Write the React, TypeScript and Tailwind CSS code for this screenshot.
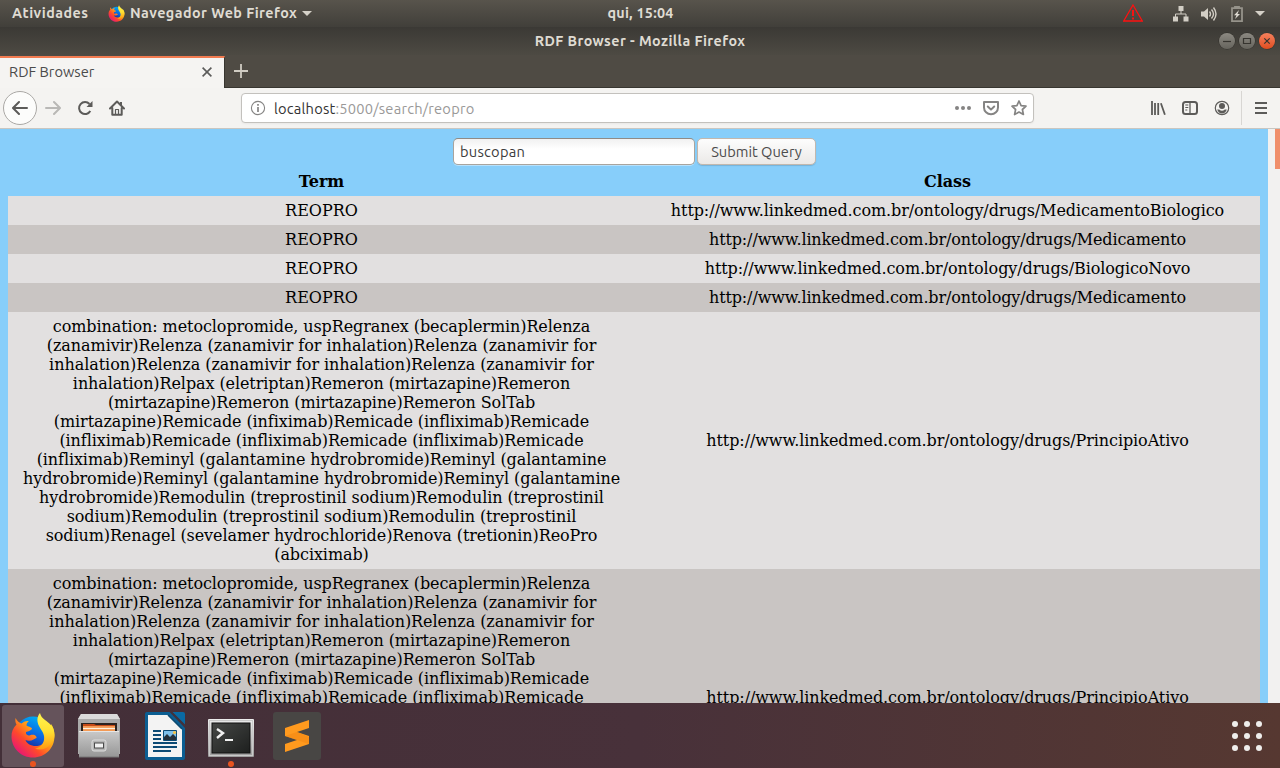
import type { ReactNode } from "react";

const UI = "font-['Ubuntu','Noto_Sans',sans-serif]";

const comboLines = [
  "combination: metoclopromide, uspRegranex (becaplermin)Relenza",
  "(zanamivir)Relenza (zanamivir for inhalation)Relenza (zanamivir for",
  "inhalation)Relenza (zanamivir for inhalation)Relenza (zanamivir for",
  "inhalation)Relpax (eletriptan)Remeron (mirtazapine)Remeron",
  "(mirtazapine)Remeron (mirtazapine)Remeron SolTab",
  "(mirtazapine)Remicade (infiximab)Remicade (infliximab)Remicade",
  "(infliximab)Remicade (infliximab)Remicade (infliximab)Remicade",
  "(infliximab)Reminyl (galantamine hydrobromide)Reminyl (galantamine",
  "hydrobromide)Reminyl (galantamine hydrobromide)Reminyl (galantamine",
  "hydrobromide)Remodulin (treprostinil sodium)Remodulin (treprostinil",
  "sodium)Remodulin (treprostinil sodium)Remodulin (treprostinil",
  "sodium)Renagel (sevelamer hydrochloride)Renova (tretionin)ReoPro",
  "(abciximab)",
];

const base = "http://www.linkedmed.com.br/ontology/drugs/";
const rows: { term: string[]; cls: string }[] = [
  { term: ["REOPRO"], cls: "MedicamentoBiologico" },
  { term: ["REOPRO"], cls: "Medicamento" },
  { term: ["REOPRO"], cls: "BiologicoNovo" },
  { term: ["REOPRO"], cls: "Medicamento" },
  { term: comboLines, cls: "PrincipioAtivo" },
  { term: comboLines, cls: "PrincipioAtivo" },
];

function Firefox({ id, className }: { id: string; className: string }) {
  return (
    <svg viewBox="0 0 44 46" className={className}>
      <defs>
        <linearGradient id={id + "a"} x1="0.9" y1="0.1" x2="0.1" y2="0.9">
          <stop offset="0" stopColor="#ffe226" />
          <stop offset="0.35" stopColor="#ffa516" />
          <stop offset="0.65" stopColor="#ff4a2b" />
          <stop offset="1" stopColor="#e3107e" />
        </linearGradient>
        <linearGradient id={id + "b"} x1="0.7" y1="0" x2="0.3" y2="1">
          <stop offset="0" stopColor="#00b3f4" />
          <stop offset="0.5" stopColor="#0a62e0" />
          <stop offset="1" stopColor="#23106e" />
        </linearGradient>
        <linearGradient id={id + "c"} x1="0.4" y1="0" x2="0.4" y2="1">
          <stop offset="0" stopColor="#fff44f" />
          <stop offset="0.5" stopColor="#ffe033" />
          <stop offset="1" stopColor="#ff980e" />
        </linearGradient>
      </defs>
      <circle cx="22" cy="23" r="18.5" fill={`url(#${id}b)`} />
      <path
        d="M4.500 6C4 9 4.500 11 5.500 12.500C2 16 .3 20 .5 25C1 37 10.500 45.500 22 45.500C34 45.500 43.500 36.500 43.500 24C43.500 19 42.500 15 40 12C40.500 24 35 33 26.500 34C20 34.500 15.500 31.500 14.500 28C17 29 20 29 22.500 27.500C24.500 26.200 26 26.600 25.500 25C24.500 22.500 21.500 22.500 19 23.200C16 24 14.500 22 15 20C17 19.500 20.500 18.500 21 16.500C20.500 15 16.500 14.500 15.500 13.500C15.500 11.500 16.500 10 18 9C14.500 8.500 12 10 10.500 11.500C8.500 11 6 9 4.500 6Z"
        fill={`url(#${id}a)`}
      />
      <path
        d="M29 1C25.500 5 26 10 28 14C31 19.500 34 22 33 28C32 33 28 36 24 36.500C34 41 43.500 31 43.500 23C43 13 37.500 11 34 8C31.500 6 29.500 4 29 1Z"
        fill={`url(#${id}c)`}
      />
    </svg>
  );
}

function TopBar() {
  return (
    <header
      className={`${UI} flex h-[27px] shrink-0 items-center bg-linear-to-b from-[#58544c] to-[#413f3a] text-[14.3px] font-bold text-[#dfdbd2]`}
    >
      <div className="flex w-[427px] items-center pl-3">
        <span className="w-[96px] shrink-0 pt-px tracking-[0.5px]">Atividades</span>
        <Firefox id="s" className="mr-[5px] h-[17px] w-[17px] shrink-0" />
        <span className="w-[168px] shrink-0 whitespace-nowrap pt-px tracking-[0.45px]">Navegador Web Firefox</span>
        <svg viewBox="0 0 10 5" className="ml-1 h-[5px] w-[10px]" fill="#d5d1c8">
          <path d="M0 0h10L5 5z" />
        </svg>
      </div>
      <span className="w-[427px] text-center tracking-[0.25px]">qui, 15:04</span>
      <div className="flex flex-1 items-center justify-end pr-[15px]">
        <svg viewBox="0 0 20 18" className="mr-[30px] mb-[2px] h-[18px] w-5" fill="none" stroke="#ff1010" strokeWidth="1.300">
          <path d="M10 1L19.300 17H.7Z" />
          <path d="M10 6v6M10 13.500v2" strokeWidth="1.900" />
        </svg>
        <svg viewBox="0 0 16 16" className="mr-3 h-4 w-4" fill="#d2cec5">
          <path d="M5.500 0h5v5h-5zM0 10.500h5v5H0zM10.500 10.500h5v5h-5z" />
          <path d="M8 5v3M2.500 11V8h10.500v3" stroke="#d2cec5" fill="none" />
        </svg>
        <svg viewBox="0 0 16 16" className="mr-[14px] h-4 w-4" fill="#d2cec5">
          <path d="M0 5.500h3L7 2v12L3 10.500H0z" />
          <path d="M8.500 5.500q2 2.500 0 5M10.500 3.500q4 4.500 0 9M12.500 1.500q5 6.500 0 13" stroke="#d2cec5" strokeWidth="1.400" fill="none" />
        </svg>
        <svg viewBox="0 0 12 16" className="mr-3 h-4 w-3" fill="none">
          <path d="M4 2V.8h4V2M1 2.200h10v13H1z" stroke="#96938b" strokeWidth="1.800" />
          <path d="M8 4L3 9.200h2.500L4 13l5-5H6.500z" fill="#dfdbd2" />
        </svg>
        <svg viewBox="0 0 10 5" className="h-[5px] w-[10px]" fill="#d5d1c8">
          <path d="M0 0h10L5 5z" />
        </svg>
      </div>
    </header>
  );
}

function WinButton({ close, children }: { close?: boolean; children: ReactNode }) {
  return (
    <span
      className={
        close
          ? "flex h-4 w-4 items-center justify-center rounded-full bg-linear-to-b from-[#f5805c] to-[#e04c1c] shadow-[0_0_0_0.5px_#35332e]"
          : "flex h-4 w-4 items-center justify-center rounded-full bg-linear-to-b from-[#8c8982] to-[#66645d] shadow-[0_0_0_0.5px_#2f2d29]"
      }
    >
      <svg viewBox="0 0 16 16" className="h-4 w-4" fill="none" stroke="#36342f" strokeWidth="1.200">
        {children}
      </svg>
    </span>
  );
}

function TitleBar() {
  return (
    <div className={`${UI} flex h-7 shrink-0 items-center bg-linear-to-b from-[#3b3935] to-[#4d4a43] text-[14.3px] font-bold text-[#dfdbd2]`}>
      <span className="w-[1215px] whitespace-nowrap pt-[2px] pl-[65px] text-center tracking-[0.42px]">RDF Browser - Mozilla Firefox</span>
      <div className="flex gap-1 pl-1">
        <WinButton>
          <path d="M4 8.500h8" />
        </WinButton>
        <WinButton>
          <path d="M4.500 5.500h7v5h-7z" />
        </WinButton>
        <WinButton close>
          <path d="M5.300 5.300l5.400 5.400M10.700 5.300l-5.400 5.400" />
        </WinButton>
      </div>
    </div>
  );
}

function TabStrip() {
  return (
    <div className={`${UI} flex h-[33px] shrink-0 border-b border-[#383630] bg-[#4f4b44]`}>
      <div className="mt-px -mb-px flex w-[225px] items-center border-t-2 border-r border-t-[#f27b50] border-r-[#383630] bg-[#f5f4f2] pl-[9px] text-[14.67px] text-[#4b4b4b]">
        <span className="w-[193px] whitespace-nowrap pb-[2px]">RDF Browser</span>
        <svg viewBox="0 0 10 10" className="mb-[2px] h-[10px] w-[10px]" stroke="#5b5b5a" strokeWidth="1.600">
          <path d="M.6.6l8.800 8.800M9.400.6L.6 9.400" />
        </svg>
      </div>
      <svg viewBox="0 0 14 14" className="mt-[9px] ml-[9px] h-[14px] w-[14px]" stroke="#d0ccc3" strokeWidth="1.800">
        <path d="M7 0v14M0 7h14" />
      </svg>
    </div>
  );
}

function Icon({ className, children }: { className: string; children: ReactNode }) {
  return (
    <svg viewBox="0 0 16 16" className={`h-4 w-4 shrink-0 ${className}`} fill="none" stroke="currentColor" strokeWidth="2" strokeLinecap="round" strokeLinejoin="round">
      {children}
    </svg>
  );
}

function NavBar() {
  return (
    <nav className={`${UI} flex h-[41px] shrink-0 items-center border-b border-[#c9c6c1] bg-[#f4f3f1] text-[#5c5b59]`}>
      <div className="ml-[3px] flex h-[34px] w-[34px] items-center justify-center rounded-full border border-[#aaa8a5] bg-[#fcfcfb]">
        <Icon className="">
          <path d="M15 8H1.200M7 2L1 8l6 6" />
        </Icon>
      </div>
      <Icon className="ml-2 text-[#b9b8b6]">
        <path d="M1 8h13.800M9 2l6 6-6 6" />
      </Icon>
      <Icon className="ml-4">
        <path d="M13.300 11A6 6 0 1 1 12.500 4" strokeLinecap="butt" />
        <path d="M15.500 1v6H9.500z" fill="currentColor" stroke="none" />
      </Icon>
      <Icon className="ml-4">
        <path d="M1 8.500L8 1.500l7 7M3.300 8v6.700h9.400V8" />
        <path d="M6.500 14V9.500h3V14" strokeWidth="1.200" />
        <path d="M12 2v3" strokeLinecap="butt" />
      </Icon>
      <div className="ml-[116px] flex h-[30px] w-[793px] items-center rounded-[4px] border border-[#c3c1bd] bg-white text-[14.67px] shadow-[0_1px_2px_#0000000c]">
        <svg viewBox="0 0 16 16" className="ml-2 h-4 w-4" fill="none" stroke="#858483">
          <circle cx="8" cy="8" r="6.600" strokeWidth="1.100" />
          <path d="M8 7v5M8 4v1.700" strokeWidth="1.700" />
        </svg>
        <span className="ml-2 w-[681px] whitespace-nowrap pt-px tracking-[0.21px] text-[#9a9998]">
          <span className="text-[#333]">localhost</span>:5000/search/reopro
        </span>
        <svg viewBox="0 0 16 16" className="h-4 w-4" fill="#858483">
          <circle cx="2" cy="8" r="2" />
          <circle cx="8" cy="8" r="2" />
          <circle cx="14" cy="8" r="2" />
        </svg>
        <Icon className="ml-3 text-[#858483]">
          <path d="M1 2h14v5.500a7 6.800 0 0 1-14 0z" />
          <path d="M4.800 6.500L8 9.600l3.200-3.100" />
        </Icon>
        <Icon className="ml-3 text-[#858483]">
          <path d="M8 1l2.100 4.600 4.900.6-3.600 3.300 1 5L8 12.100l-4.400 2.400 1-5L1 6.200l4.900-.6z" strokeWidth="1.700" />
        </Icon>
      </div>
      <Icon className="ml-[116px]">
        <path d="M2 1v14M5 3v12M8.200 3v12M10.900 3.300l4 11.400" strokeLinecap="butt" strokeWidth="1.800" />
      </Icon>
      <Icon className="ml-4">
        <rect x="1" y="2" width="14" height="12" rx="2.500" />
        <path d="M8 2v12" strokeWidth="1.300" />
        <path d="M3.300 5h3M3.300 7.500h3M3.300 10h2" strokeWidth="1" strokeLinecap="butt" />
      </Icon>
      <Icon className="ml-4">
        <circle cx="8" cy="8" r="6.700" strokeWidth="1.200" />
        <circle cx="8" cy="6" r="3" fill="currentColor" stroke="none" />
        <path d="M3.200 9.500h2Q8 12 10.800 9.500h2Q11.500 13.400 8 13.400T3.200 9.500z" fill="currentColor" stroke="none" />
      </Icon>
      <div className="ml-[11px] h-[34px] w-px bg-[#d8d6d3]" />
      <Icon className="ml-[11px]">
        <path d="M2 3h12M2 8h12M2 13h12" strokeLinecap="butt" />
      </Icon>
    </nav>
  );
}

function Page() {
  return (
    <main className="flex min-h-0 flex-1 overflow-hidden bg-[#f2f1f0]">
      <div className="w-[1268px] bg-[#87cefa] px-2 font-['DejaVu_Serif',serif] text-[16px] leading-[19px] text-black">
        <div className={`${UI} flex h-[38px] items-end gap-[2px] pl-[445px] text-[14.67px]`}>
          <div className="mb-[2px] flex h-[27px] w-[242px] items-center rounded-[5px] border border-[#a9a49d] border-t-[#8f8b86] bg-linear-to-b from-[#f1f1f1] to-white to-40% pl-[6px] text-[#3c3c3c] shadow-[0_1px_0_#ffffff66]">
            <span className="pb-px tracking-[0.25px]">buscopan</span>
          </div>
          <button className="mb-[2px] flex h-[27px] w-[119px] items-center justify-center whitespace-nowrap rounded-[5px] border border-[#c2b8ae] bg-linear-to-b from-[#fdfdfd] to-[#ebe9e7] pb-px text-[#4c4c4c] shadow-[0_1px_1px_#00000022]">
            Submit Query
          </button>
        </div>
        <table className="w-[1252px] table-fixed border-collapse text-center">
          <thead>
            <tr>
              <th className="p-[5px] pl-[6px]">Term</th>
              <th className="p-[5px] pl-[6px]">Class</th>
            </tr>
          </thead>
          <tbody>
            {rows.map((r, i) => (
              <tr key={i} className="odd:bg-[#e2e0e0] even:bg-[#c9c5c3]">
                <td className="p-[5px] pl-[6px]">
                  {r.term.map((line, j) => (
                    <span
                      key={j}
                      className={
                        r.term.length === 1
                          ? "block"
                          : j === 1 || j === 2
                            ? "block whitespace-nowrap tracking-[-0.05px]"
                            : "block whitespace-nowrap tracking-[-0.09px]"
                      }
                    >
                      {line}
                    </span>
                  ))}
                </td>
                <td
                  className={
                    r.cls === "Medicamento"
                      ? "whitespace-nowrap p-[5px] pl-[6px] tracking-[-0.13px]"
                      : "whitespace-nowrap p-[5px] pl-[6px] tracking-[-0.095px]"
                  }
                >
                  {base + r.cls}
                </td>
              </tr>
            ))}
          </tbody>
        </table>
      </div>
      <div className="flex flex-1 justify-end">
        <div className="h-10 w-[5px] bg-[#f08f6b]" />
      </div>
    </main>
  );
}

function Files() {
  return (
    <svg viewBox="0 0 44 46" className="h-[46px] w-11">
      <defs>
        <linearGradient id="fg" x1="0" y1="0" x2="0" y2="1">
          <stop offset="0" stopColor="#c9c9c9" />
          <stop offset="1" stopColor="#969696" />
        </linearGradient>
      </defs>
      <path d="M4 1h36l3 5v35H1V6z" fill="#aaa" />
      <path d="M4 1h36l3 5H1z" fill="#dadada" />
      <path d="M4 10h36v9H4z" fill="#2c2320" />
      <path d="M6 11h11l2 1h19v7H6z" fill="#c64a17" />
      <path d="M6 13h32v6H6z" fill="#f39a55" />
      <path d="M6 15.500h32" stroke="#fff0df" strokeWidth="1.200" />
      <path d="M2 18h40v26H2z" fill="url(#fg)" />
      <path d="M2 18.500h40" stroke="#e6e6e6" />
      <path d="M2 44h40" stroke="#777" />
      <rect x="15" y="27" width="14" height="11" rx="2" fill="#b5b5b5" stroke="#dedede" />
      <rect x="17.500" y="30" width="9" height="5" fill="#f2f2f2" stroke="#4a4a4a" />
    </svg>
  );
}

function Writer() {
  return (
    <svg viewBox="0 0 40 48" className="h-12 w-10">
      <path d="M2 0h24l14 14v32q0 2-2 2H2q-2 0-2-2V2q0-2 2-2z" fill="#0b5e92" />
      <path d="M27.500 0H38q2 0 2 2v10.500z" fill="#0a6aa3" />
      <path d="M26.500 0L40 13.500V16L24.500 0z" fill="#44303a" />
      <path d="M3 3h20l14 14v28H3z" fill="#f3f3f3" />
      <path d="M23 3l14 14" stroke="#0d4a70" strokeWidth="1.500" />
      <path d="M8 19h8M8 23h8M8 27h8M8 31h24M8 35h24M8 39h18" stroke="#0c4a74" strokeWidth="2" />
      <path d="M18.500 18.500h13v10h-13z" fill="#7fc0ea" stroke="#0c4a74" />
      <circle cx="29.500" cy="20.500" r="1.600" fill="#f5c343" />
      <path d="M19 28v-3l3-3 3 3 3-3 3 3v3z" fill="#24303a" />
    </svg>
  );
}

function Terminal() {
  return (
    <svg viewBox="0 0 46 38" className="h-[38px] w-[46px]">
      <defs>
        <linearGradient id="tg" x1="0" y1="0" x2="0" y2="1">
          <stop offset="0" stopColor="#ededed" />
          <stop offset="1" stopColor="#9b9b9b" />
        </linearGradient>
        <linearGradient id="th" x1="0" y1="0" x2="1" y2="1">
          <stop offset="0" stopColor="#464846" />
          <stop offset="1" stopColor="#1d1f1e" />
        </linearGradient>
      </defs>
      <rect x="0" y="0" width="46" height="38" rx="1" fill="url(#tg)" />
      <rect x="1.500" y="1.500" width="43" height="35" fill="none" stroke="#c9c9c9" />
      <rect x="4" y="4" width="38" height="30" fill="url(#th)" stroke="#111" />
      <path d="M9 10l6 4-6 5" fill="none" stroke="#f1f1f1" strokeWidth="2.400" />
      <path d="M17 21h8" stroke="#f1f1f1" strokeWidth="2" />
    </svg>
  );
}

function Sublime() {
  return (
    <svg viewBox="0 0 48 48" className="h-12 w-12">
      <rect width="48" height="48" rx="3" fill="#484644" />
      <path d="M36 8v8l-12 4 12 4v8L12 40v-8l12-4-12-4v-8z" fill="#ff9a1e" />
      <path d="M12 24l12 4 12 4v-7l-12-5z" fill="#f28410" opacity="0.5" />
    </svg>
  );
}

function Dock() {
  return (
    <footer className="flex h-[65px] shrink-0 items-center bg-linear-to-r from-[#432f38] via-[#48313a] to-[#563831]">
      <div className="ml-0.5 flex h-[62px] w-[62px] flex-col items-center rounded-[3px] bg-[#65535b] pt-[7px]">
        <Firefox id="d" className="h-[46px] w-11 shrink-0" />
        <span className="mt-[3px] h-[6px] w-[6px] shrink-0 rounded-full bg-[#e95420]" />
      </div>
      <div className="ml-[13px] flex w-11 justify-center">
        <Files />
      </div>
      <div className="ml-6 flex">
        <Writer />
      </div>
      <div className="ml-[23px] flex h-[62px] flex-col items-center pt-[14px]">
        <Terminal />
        <span className="mt-1 h-[6px] w-[6px] shrink-0 rounded-full bg-[#e95420]" />
      </div>
      <div className="ml-[19px] flex">
        <Sublime />
      </div>
      <div className="mr-[18px] ml-auto grid grid-cols-3 gap-[6px]">
        {Array.from({ length: 9 }, (_, i) => (
          <span key={i} className="h-[6px] w-[6px] rounded-full bg-[#efeeec]" />
        ))}
      </div>
    </footer>
  );
}

export default function App() {
  return (
    <div className="flex h-[768px] w-[1280px] flex-col overflow-hidden">
      <TopBar />
      <TitleBar />
      <TabStrip />
      <NavBar />
      <Page />
      <Dock />
    </div>
  );
}
